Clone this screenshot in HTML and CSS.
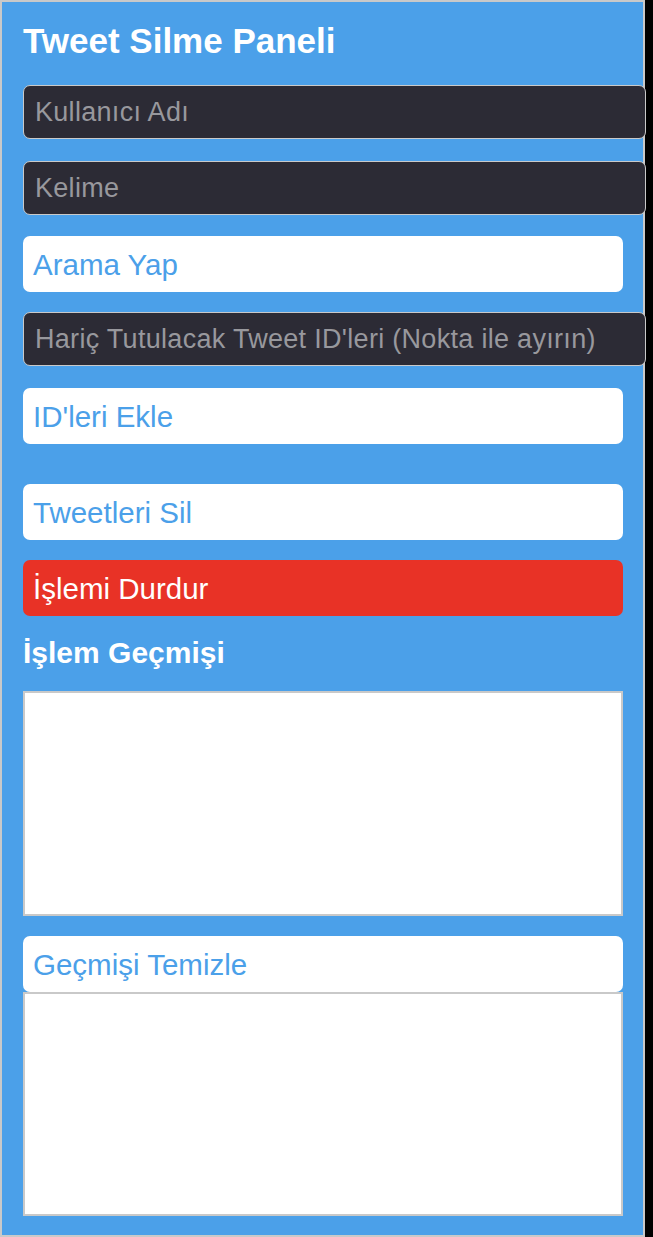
FILE: index.html
```html
<!DOCTYPE html>
<html lang="tr">
<head>
<meta charset="utf-8">
<title>Tweet Silme Paneli</title>
<link rel="stylesheet" href="styles.css">
</head>
<body>
<div class="panel">
  <h2 class="title">Tweet Silme Paneli</h2>
  <input class="field f-user" type="text" placeholder="Kullanıcı Adı">
  <input class="field f-word" type="text" placeholder="Kelime">
  <button class="btn b-search">Arama Yap</button>
  <input class="field f-ids" type="text" placeholder="Hariç Tutulacak Tweet ID'leri (Nokta ile ayırın)">
  <button class="btn b-add">ID'leri Ekle</button>
  <button class="btn b-delete">Tweetleri Sil</button>
  <button class="btn btn-stop">İşlemi Durdur</button>
  <h3 class="subtitle">İşlem Geçmişi</h3>
  <textarea class="log log-1"></textarea>
  <button class="btn b-clear">Geçmişi Temizle</button>
  <textarea class="log log-2"></textarea>
</div>
</body>
</html>
```
FILE: styles.css
```css
html, body {
  margin: 0;
  padding: 0;
  background: #000;
}
body {
  width: 653px;
  height: 1237px;
  overflow: hidden;
  font-family: "Liberation Sans", Arial, Helvetica, sans-serif;
}
.panel {
  box-sizing: border-box;
  width: 645px;
  height: 1237px;
  background: #4ba0e9;
  border: 2px solid #c9c9c9;
  padding: 19px 20px 19px 21px;
  display: flex;
  flex-direction: column;
  align-items: flex-start;
  overflow: visible;
}
.title {
  margin: 0 0 24px 0;
  font-size: 35px;
  line-height: 40px;
  font-weight: bold;
  color: #fff;
}
.field {
  box-sizing: content-box;
  width: 600px;
  height: 52px;
  padding: 0 10px 0 11px;
  margin: 0 0 22px 0;
  border: 1px solid #c9c9c9;
  border-radius: 7px;
  background: #2c2b35;
  color: #fff;
  font-family: "Liberation Sans", Arial, Helvetica, sans-serif;
  font-size: 27px;
  letter-spacing: 0.3px;
  outline: none;
}
.field::placeholder {
  color: #98989d;
  opacity: 1;
}
.f-word { margin-bottom: 21px; }
.f-ids { margin-bottom: 22px; }
.btn {
  box-sizing: border-box;
  width: 600px;
  height: 56px;
  margin: 0 0 20px 0;
  padding: 1px 10px 0 10px;
  border: none;
  border-radius: 7px;
  background: #fff;
  color: #4ba0e9;
  text-align: left;
  font-family: "Liberation Sans", Arial, Helvetica, sans-serif;
  font-size: 29.5px;
}
.b-add { margin-bottom: 40px; }
.btn-stop {
  background: #e83226;
  color: #fff;
}
.subtitle {
  margin: 0 0 21px 0;
  font-size: 30px;
  line-height: 34px;
  font-weight: bold;
  color: #fff;
}
.log {
  box-sizing: border-box;
  width: 600px;
  margin: 0;
  padding: 2px;
  border: 2px solid #c9c9c9;
  background: #fff;
  resize: none;
  outline: none;
}
.log-1 {
  height: 225px;
  margin-bottom: 20px;
}
.b-clear { margin-bottom: 0; }
.log-2 { height: 224px; }
```
